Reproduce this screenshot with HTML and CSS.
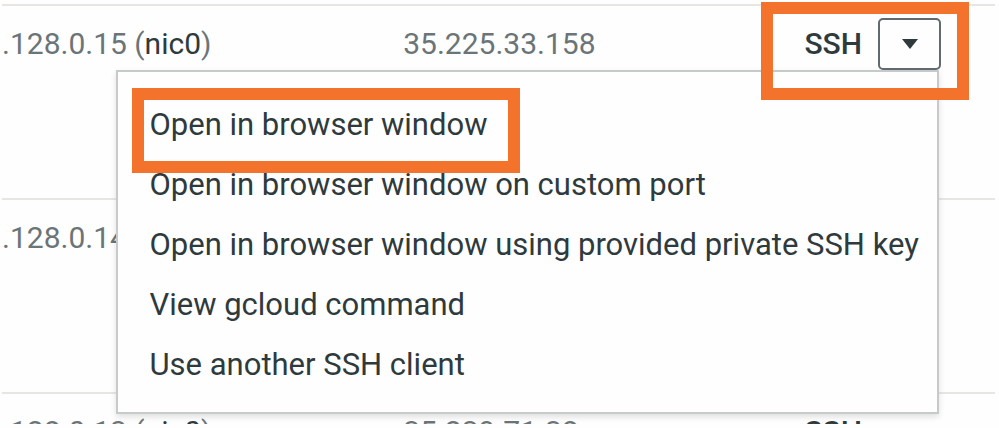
FILE: index.html
```html
<!DOCTYPE html>
<html lang="en">
<head>
<meta charset="utf-8">
<title>VM instances</title>
<link rel="stylesheet" href="styles.css">
</head>
<body>
<main class="viewport">
  <table class="instances">
    <colgroup>
      <col class="col-internal">
      <col class="col-external">
      <col class="col-connect">
    </colgroup>
    <tbody>
      <tr>
        <td>.128.0.15 (<a class="nic" href="#nic0">nic0</a>)</td>
        <td class="external">35.225.33.158</td>
        <td>
          <div class="connect">
            <button class="ssh" type="button">SSH</button>
            <button class="toggle" type="button" aria-label="SSH options" aria-expanded="true">
              <svg class="caret" viewBox="0 0 16 10" aria-hidden="true"><path d="M0 0H16L8 10Z"/></svg>
            </button>
            <div class="menu" role="menu">
              <button class="item marked" type="button" role="menuitem">Open in browser window</button>
              <button class="item" type="button" role="menuitem">Open in browser window on custom port</button>
              <button class="item" type="button" role="menuitem">Open in browser window using provided private SSH key</button>
              <button class="item" type="button" role="menuitem">View gcloud command</button>
              <button class="item" type="button" role="menuitem">Use another SSH client</button>
            </div>
            <span class="callout"></span>
          </div>
        </td>
      </tr>
      <tr>
        <td>.128.0.14</td>
        <td></td>
        <td></td>
      </tr>
      <tr>
        <td>.128.0.13 (<a class="nic" href="#nic0">nic0</a>)</td>
        <td class="external">35.239.71.38</td>
        <td>
          <div class="connect">
            <button class="ssh" type="button">SSH</button>
            <span class="toggle-space"></span>
          </div>
        </td>
      </tr>
    </tbody>
  </table>
</main>
</body>
</html>
```
FILE: styles.css
```css
* {
  box-sizing: border-box;
}

body {
  margin: 0;
  background: #fefefe;
  color: #2f3a3d;
  font-family: Roboto, "Liberation Sans", sans-serif;
  font-size: 30px;
  line-height: 52px;
}

.viewport {
  height: calc(100vh - 4px);
  padding: 4px 4px 0 2px;
  overflow: hidden;
}

.instances {
  width: 100%;
  table-layout: fixed;
  border-collapse: collapse;
}

.col-internal,
.col-external {
  width: 40%;
}

.instances tr {
  height: 194px;
  border-top: 2px solid #e8e5e3;
}

.instances td {
  padding: 12px 0 0;
  vertical-align: top;
  white-space: nowrap;
  color: #6b7578;
}

.instances .external {
  padding-left: 4px;
}

.nic {
  color: #2f3a3d;
  text-decoration: none;
}

button {
  margin: 0;
  padding: 0;
  border: 0;
  background: none;
  color: #2f3a3d;
  font: inherit;
  text-align: left;
}

.connect {
  position: relative;
  display: flex;
  justify-content: flex-end;
  gap: 16px;
  width: max-content;
  margin: 0 54px 0 auto;
}

.ssh {
  font-weight: 500;
}

.toggle,
.toggle-space {
  width: 63px;
  height: 52px;
}

.toggle {
  position: relative;
  z-index: 2;
  display: flex;
  align-items: center;
  justify-content: center;
  border: 2px solid #5f6b6e;
  border-radius: 5px;
  background: #fefefe;
}

.caret {
  width: 16px;
  height: 10px;
  fill: #2f3a3d;
}

.menu {
  position: absolute;
  z-index: 1;
  top: 100%;
  right: 2px;
  display: flex;
  flex-direction: column;
  padding: 23px 18px 17px 31px;
  border: 2px solid #c6caca;
  background: #fefefe;
  box-shadow: 0 3px 6px rgba(0, 0, 0, 0.12);
  font-size: 31px;
}

.item {
  position: relative;
  line-height: 60px;
}

.marked {
  align-self: flex-start;
}

.marked::after,
.callout {
  position: absolute;
  z-index: 3;
  border: 12px solid #f3722c;
  content: "";
  pointer-events: none;
}

.marked::after {
  inset: -7px -33px -18px -17px;
}

.callout {
  inset: -16px -28px -30px -43px;
}
```
